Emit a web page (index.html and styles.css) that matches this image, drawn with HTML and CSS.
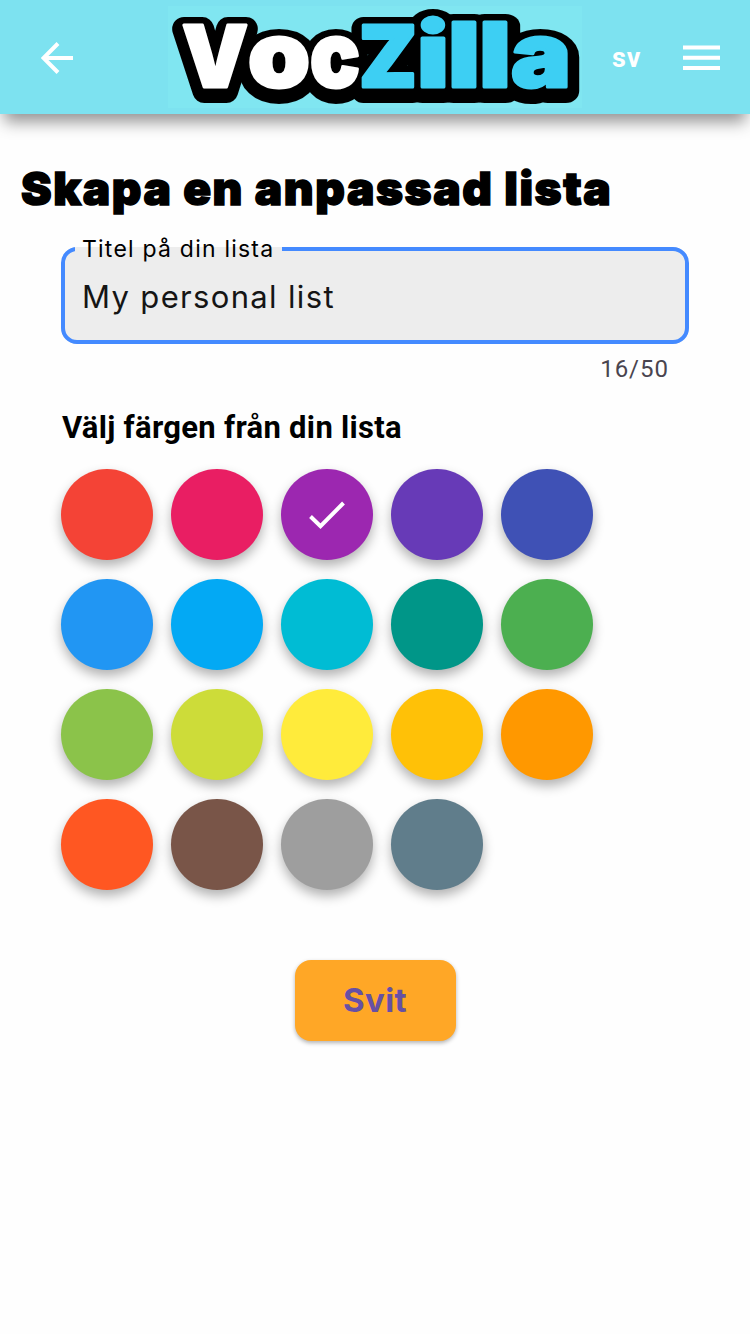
FILE: index.html
```html
<!DOCTYPE html>
<html lang="sv">
<head>
<meta charset="utf-8">
<title>VocZilla</title>
<link rel="stylesheet" href="styles.css">
</head>
<body>
<header class="bar">
  <svg class="back" viewBox="0 0 32 32"><path d="M32 16H3M17 1.500L2.500 16L17 30.500"/></svg>
  <svg class="logo" viewBox="168 6 414 102">
    <use href="#word" class="logo-shadow" y="4"/>
    <text id="word" class="logo-text" y="87"><tspan class="cap" x="182" textLength="66" lengthAdjust="spacingAndGlyphs">V</tspan><tspan class="low" x="248" textLength="62" lengthAdjust="spacingAndGlyphs">o</tspan><tspan class="low" x="310" textLength="50" lengthAdjust="spacingAndGlyphs">c</tspan><tspan class="cap tail" x="359" textLength="58" lengthAdjust="spacingAndGlyphs">Z</tspan><tspan class="tall tail" x="417" textLength="32" lengthAdjust="spacingAndGlyphs">i</tspan><tspan class="tall tail" x="448" textLength="32" lengthAdjust="spacingAndGlyphs">l</tspan><tspan class="tall tail" x="479" textLength="32" lengthAdjust="spacingAndGlyphs">l</tspan><tspan class="low tail" x="511" textLength="60" lengthAdjust="spacingAndGlyphs">a</tspan></text>
  </svg>
  <span class="lang">sv</span>
  <svg class="menu" viewBox="0 0 37 26"><path d="M0 2.500H37M0 12.750H37M0 23H37"/></svg>
</header>
<main class="page">
  <h1 class="title">Skapa en anpassad lista</h1>
  <section class="form">
    <fieldset class="field">
      <legend class="label">Titel på din lista</legend>
      <div class="value">My personal list</div>
    </fieldset>
    <div class="counter">16/50</div>
    <h2 class="subtitle">Välj färgen från din lista</h2>
    <div class="swatches">
      <i class="dot red"></i><i class="dot pink"></i>
      <i class="dot purple"><svg class="check" viewBox="0 0 36 28"><path d="M1.500 15.500L11.500 25.200L34.500 2"/></svg></i>
      <i class="dot deep-purple"></i><i class="dot indigo"></i>
      <i class="dot blue"></i><i class="dot light-blue"></i><i class="dot cyan"></i><i class="dot teal"></i><i class="dot green"></i>
      <i class="dot light-green"></i><i class="dot lime"></i><i class="dot yellow"></i><i class="dot amber"></i><i class="dot orange"></i>
      <i class="dot deep-orange"></i><i class="dot brown"></i><i class="dot grey"></i><i class="dot blue-grey"></i>
    </div>
  </section>
  <button class="submit">Svit</button>
</main>
</body>
</html>
```
FILE: styles.css
```css
body { margin: 0; min-height: 1334px; background: #fefefe; font-family: Roboto, sans-serif; color: #000; }
.bar { display: flex; align-items: center; height: 114px; box-sizing: border-box; padding: 0 30px 0 41px; background: #7de2f0; box-shadow: 0 12px 15px -4px rgba(0,0,0,.42); }
.back { width: 32px; height: 32px; margin: 1px 95px 0 0; fill: none; stroke: #fff; stroke-width: 4; }
.logo { width: 414px; height: 102px; background: #80e6f1; overflow: visible; }
.logo-text { font-family: Inter, sans-serif; font-weight: 900; fill: var(--front, #fff); stroke: var(--front, #fff); stroke-width: var(--line, 3); stroke-linejoin: round; }
.cap { font-size: 85px; }
.low { font-size: 91px; }
.tall { font-size: 89px; }
.tail { fill: var(--front, #3dcff3); stroke: var(--front, #3dcff3); }
.logo-shadow { --front: #000; --line: 24; }
.lang { margin: 2px 0 0 30px; width: 30px; font: 700 27px/32px Roboto, sans-serif; letter-spacing: 1px; color: #fff; }
.menu { width: 37px; height: 26px; margin: 1px 0 0 auto; fill: none; stroke: #fff; stroke-width: 4; }
.page { display: flex; flex-direction: column; padding: 44px 61px 60px; }
.title { margin: 0 0 0 -40px; font: 900 46px/60px Inter, sans-serif; letter-spacing: 1.570px; white-space: nowrap; -webkit-text-stroke: 1.500px #000; }
.form { display: flex; flex-direction: column; margin-top: 16px; }
.field { box-sizing: border-box; height: 110px; margin: 0; padding: 0 17px; border: 4px solid #448aff; border-radius: 16px; background: #ededed; min-width: 0; }
.label { height: 30px; padding: 0 8px 0 7px; margin-left: -7px; font: 400 23px/30px Inter, sans-serif; letter-spacing: 1.220px; }
.value { font: 400 31px/44px Inter, sans-serif; letter-spacing: 1.340px; color: #151515; padding-top: 11px; }
.counter { align-self: flex-end; margin: 10px 20px 0 0; font-size: 24px; line-height: 30px; letter-spacing: 1px; color: #49454f; }
.subtitle { margin: 24px 0 0 1px; font: 700 31px/40px Roboto, sans-serif; letter-spacing: .3px; }
.swatches { display: grid; grid-template-columns: repeat(5, 92px); gap: 18px; margin-top: 21px; }
.dot { display: flex; align-items: center; justify-content: center; height: 91px; margin-bottom: 1px; border-radius: 50%; box-shadow: 0 6px 12px rgba(0,0,0,.3); }
.check { width: 36px; height: 28px; fill: none; stroke: #fff; stroke-width: 4; }
.red { background: #f44336; }
.pink { background: #e91e63; }
.purple { background: #9c27b0; }
.deep-purple { background: #673ab7; }
.indigo { background: #3f51b5; }
.blue { background: #2196f3; }
.light-blue { background: #03a9f4; }
.cyan { background: #00bcd4; }
.teal { background: #009688; }
.green { background: #4caf50; }
.light-green { background: #8bc34a; }
.lime { background: #cddc39; }
.yellow { background: #ffeb3b; }
.amber { background: #ffc107; }
.orange { background: #ff9800; }
.deep-orange { background: #ff5722; }
.brown { background: #795548; }
.grey { background: #9e9e9e; }
.blue-grey { background: #607d8b; }
.submit { align-self: center; width: 161px; height: 81px; margin-top: 69px; padding: 0; border: 0; border-radius: 16px; background: #ffa726; box-shadow: 0 2px 4px rgba(0,0,0,.3); font: 700 33px/81px Inter, sans-serif; letter-spacing: .4px; color: #6750a4; }
```
